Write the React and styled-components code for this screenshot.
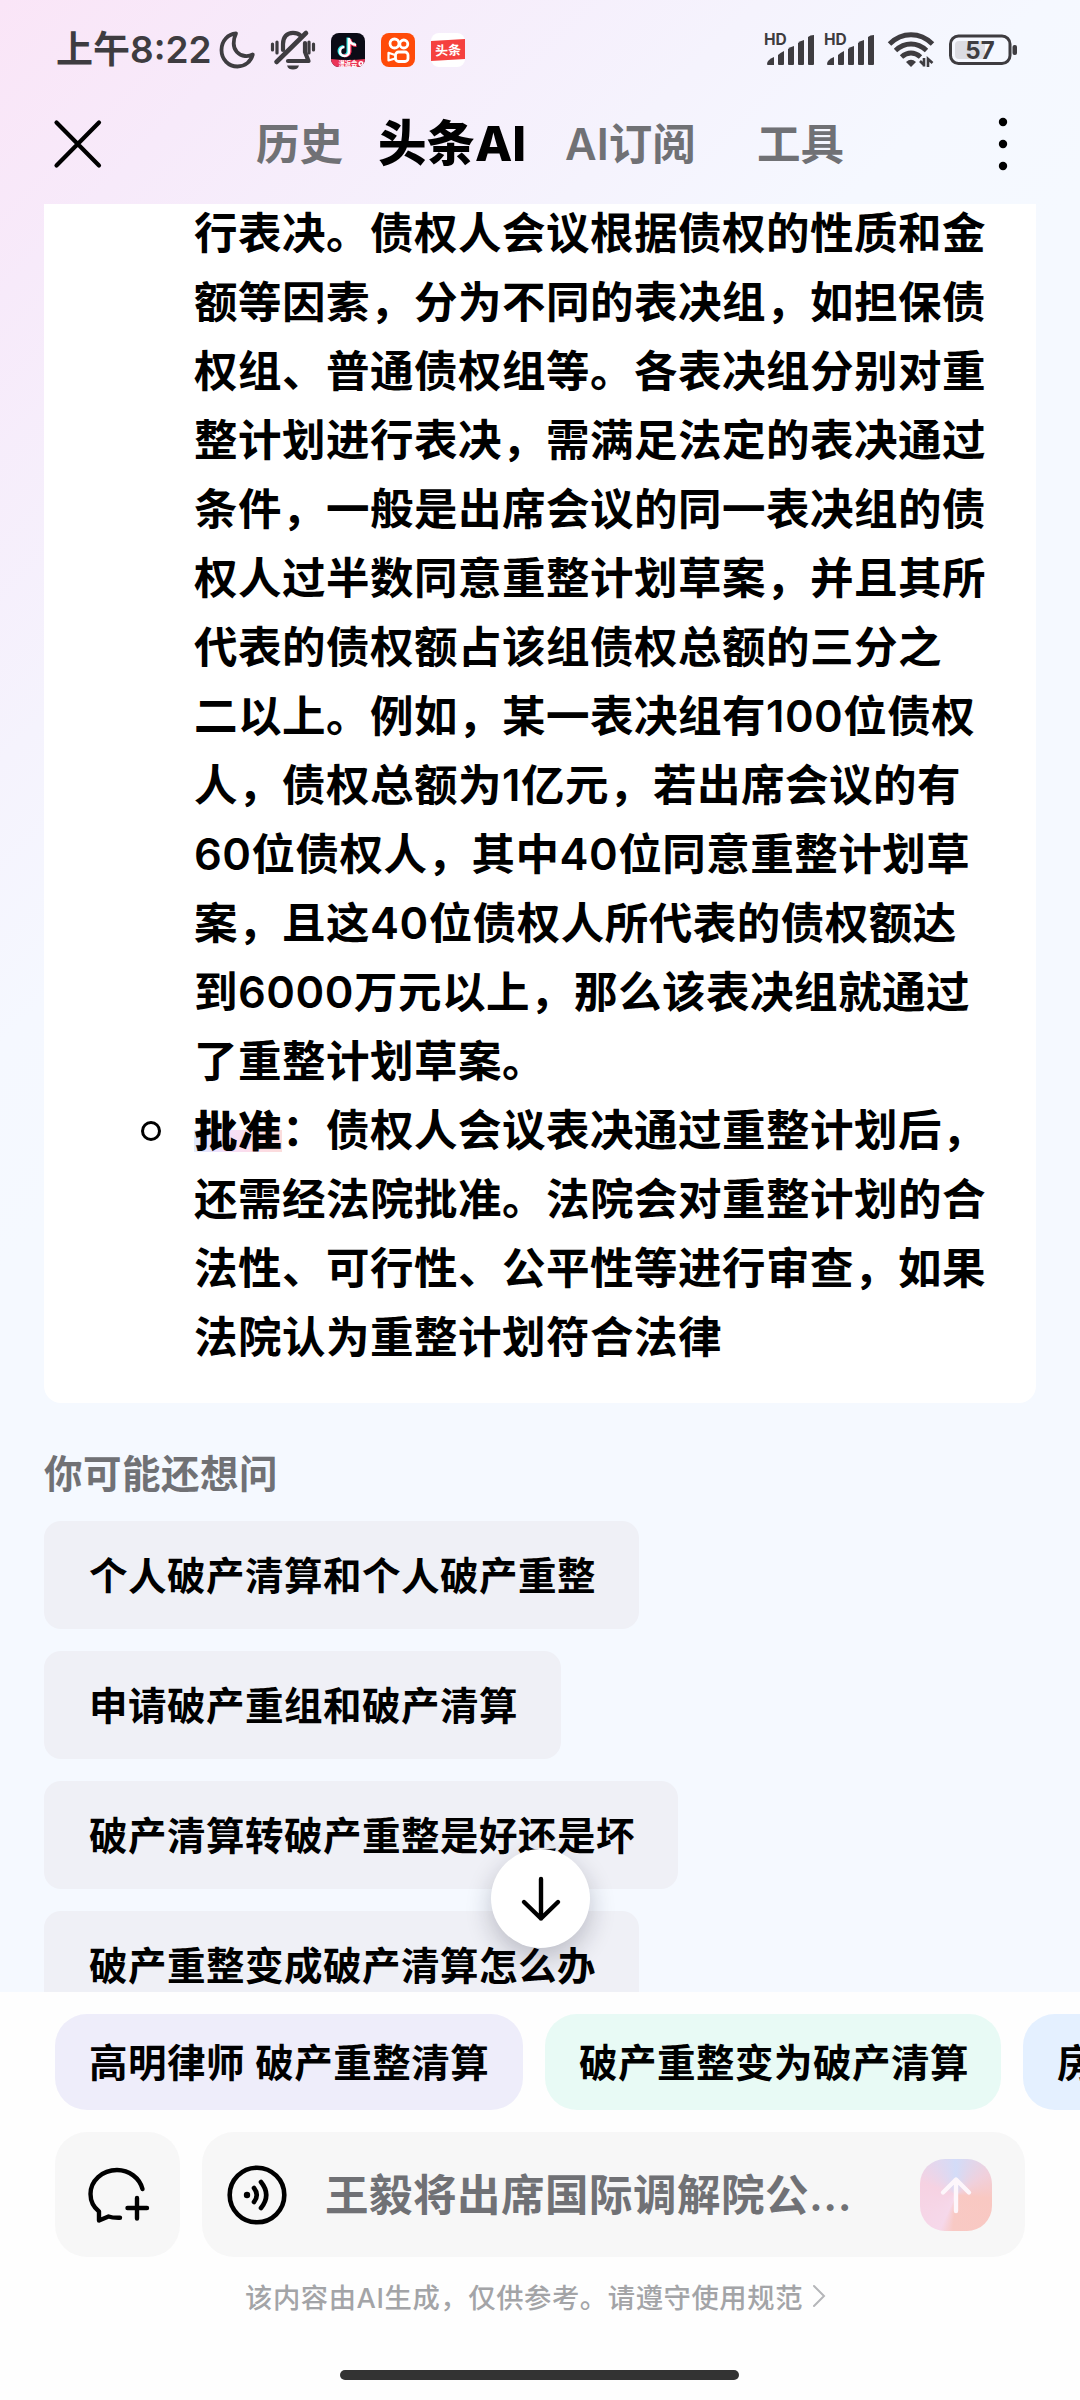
import React from 'react';
import styled, { createGlobalStyle } from 'styled-components';

const COLORS = {
    ink: '#000',
    muted: '#707175',
    faint: '#a3a4a7',
    status: '#3e3c40',
};

const GlobalStyle = createGlobalStyle`
    * {
        box-sizing: border-box;
    }

    body {
        margin: 0;
        font-family: Inter, 'Noto Sans CJK SC', sans-serif;
        color: ${COLORS.ink};
    }

    svg {
        display: block;
        flex: none;
        overflow: visible;
    }
`;

const Screen = styled.div`
    width: 1080px;
    height: 2400px;
    display: flex;
    flex-direction: column;
    overflow: hidden;
    background:
        linear-gradient(135deg, #fae5f7 0px, #f7eafa 210px, #f5f3fd 540px, #f5f8ff 740px, rgba(245, 249, 255, 0) 900px),
        #f5f9ff;
`;

const StatusBar = styled.div`
    height: 96px;
    display: flex;
    align-items: center;
    padding: 3px 62px 0 56px;
    color: ${COLORS.status};
`;

const Clock = styled.span`
    width: 163px;
    padding-bottom: 5px;
    font-size: 37px;
    font-weight: 600;
    white-space: nowrap;
`;

const StatusGroup = styled.div`
    display: flex;
    align-items: center;
    gap: ${props => props.$gap}px;
    margin-left: ${props => props.$push ? 'auto' : '0'};
`;

const NavBar = styled.div`
    height: 108px;
    display: flex;
    align-items: center;
    padding: 0 72px 12px 54px;
`;

const Tabs = styled.div`
    display: flex;
    align-items: center;
    margin-left: 154px;
    margin-right: auto;
`;

const Tab = styled.span`
    width: ${props => props.$width}px;
    font-size: ${props => props.$active ? 48.5 : 43.5}px;
    font-weight: ${props => props.$active ? 800 : 600};
    line-height: 60px;
    color: ${props => props.$active ? COLORS.ink : COLORS.muted};
    white-space: nowrap;
`;

const Feed = styled.div`
    height: 1788px;
    flex: none;
    overflow: hidden;
    padding: 0 44px;
`;

const Answer = styled.div`
    height: 1199px;
    padding: 0 0 0 150px;
    background: #fff;
    border-radius: 0 0 17px 17px;
    overflow: hidden;
`;

const Line = styled.p`
    margin: 0;
    height: 69px;
    line-height: 69px;
    font-size: 43.5px;
    font-weight: 600;
    letter-spacing: 0.5px;
    white-space: nowrap;

    &:first-child {
        margin-top: -5px;
    }
`;

const BulletLine = styled(Line)`
    display: flex;
    align-items: center;
    margin-left: -53px;
`;

const Bullet = styled.span`
    width: 20px;
    height: 20px;
    margin-right: 33px;
    border: 3px solid ${COLORS.ink};
    border-radius: 50%;
`;

const Term = styled.strong`
    height: 42px;
    line-height: 42px;
    font-weight: 900;
    background: linear-gradient(90deg, #dfeafd, #f2e0fc 35%, #fddce8 65%, #fbdcdb) 0 100% / 100% 22px no-repeat;
`;

const FollowTitle = styled.h2`
    margin: 0;
    height: 118px;
    padding-top: 41px;
    line-height: 60px;
    font-size: 38.5px;
    font-weight: 600;
    letter-spacing: 0.5px;
    color: ${COLORS.muted};
`;

const Suggestions = styled.div`
    display: flex;
    flex-direction: column;
    align-items: flex-start;
    gap: 22px;
`;

const Suggestion = styled.div`
    height: 108px;
    padding: 0 43px 0 45px;
    background: #eff0f6;
    border-radius: 17px;
    font-size: 38.5px;
    font-weight: 600;
    line-height: 111px;
    letter-spacing: 0.5px;
    white-space: nowrap;
`;

const ScrollDown = styled.button`
    position: absolute;
    left: 491px;
    top: 1849px;
    width: 99px;
    height: 99px;
    padding: 0;
    display: flex;
    align-items: center;
    justify-content: center;
    border: none;
    border-radius: 50%;
    background: #fff;
    box-shadow: 0 10px 26px rgba(20, 20, 40, 0.24);
`;

const Footer = styled.div`
    flex: 1;
    display: flex;
    flex-direction: column;
    padding: 22px 0 0 55px;
    background: #fefefe;
`;

const PillRow = styled.div`
    display: flex;
    gap: 22px;
    overflow: hidden;
`;

const Pill = styled.div`
    flex: none;
    width: ${props => props.$width}px;
    height: 96px;
    padding-left: 34px;
    border-radius: 32px;
    background: ${props => props.$tint};
    font-size: 38.5px;
    font-weight: 600;
    line-height: 98px;
    letter-spacing: 0.5px;
    white-space: nowrap;
`;

const InputRow = styled.div`
    display: flex;
    gap: 22px;
    margin-top: 22px;
`;

const NewChat = styled.div`
    width: 125px;
    height: 125px;
    display: flex;
    align-items: center;
    justify-content: center;
    border-radius: 32px;
    background: #f7f7f7;
`;

const InputBox = styled.div`
    width: 823px;
    height: 125px;
    display: flex;
    align-items: center;
    padding: 0 33px 0 25px;
    border-radius: 32px;
    background: #f7f7f7;
`;

const Placeholder = styled.span`
    flex: 1;
    margin-left: 38px;
    padding-bottom: 5px;
    font-size: 43.5px;
    font-weight: 600;
    letter-spacing: 0.5px;
    color: ${COLORS.muted};
    white-space: nowrap;
`;

const Send = styled.div`
    width: 72px;
    height: 72px;
    display: flex;
    align-items: center;
    justify-content: center;
    border-radius: 25px;
    background: conic-gradient(from 0deg at 50% 50%, #d3dcf8, #f0d0dc 55deg, #f9c8c2 95deg, #f8c9c4 185deg, #f6d8ea 205deg, #f6d2e2 290deg, #d3dcf8);
`;

const Disclaimer = styled.div`
    display: flex;
    align-items: center;
    height: 36px;
    margin: 21px 0 0 190px;
    font-size: 27.3px;
    font-weight: 500;
    letter-spacing: 0.6px;
    color: ${COLORS.faint};
    white-space: nowrap;

    svg {
        margin-left: 9px;
    }
`;

const HomeBar = styled.div`
    width: 399px;
    height: 10px;
    margin: 56px 0 0 285px;
    border-radius: 5px;
    background: #333;
`;

const Moon = () => (
    <svg width="36" height="38" viewBox="0 0 36 38" fill="none" stroke={COLORS.status} strokeWidth="3.8" strokeLinejoin="round">
        <path d="M17 2.5C9 3 2.500 10 2.500 19C2.500 28.500 9.500 35.500 18.500 35.500C26 35.500 32 30.500 33.800 23.500C31 25 28.500 25.300 26 25C19.500 24.500 14.700 19 14.700 12.500C14.700 8.500 15.500 5.500 17 2.500Z" />
    </svg>
);

const MutedBell = () => (
    <svg width="44" height="40" viewBox="0 0 44 40" fill="none" stroke={COLORS.status} strokeLinecap="round">
        <path d="M1.500 14v6M6 12v11M38 12v11M42.500 14v6" strokeWidth="3.200" />
        <path d="M12 20V14C12 7 16 2.800 22 2.800C25 2.800 27.500 3.600 29.500 5.500" strokeWidth="4.200" />
        <path d="M34 13V22L37.500 31H17" strokeWidth="4.200" strokeLinejoin="round" />
        <path d="M35 3L5.500 32" strokeWidth="4.600" />
        <path d="M16 35.500H28C27 38.500 25 39.500 22 39.500C19 39.500 17 38.500 16 35.500Z" fill={COLORS.status} stroke="none" />
    </svg>
);

const NoteApp = () => (
    <svg width="34" height="34" viewBox="0 0 34 34">
        <defs>
            <clipPath id="note-clip"><rect width="34" height="34" rx="8" /></clipPath>
        </defs>
        <g clipPath="url(#note-clip)">
            <rect width="34" height="34" fill="#0b0b16" />
            <g fill="none" strokeWidth="3">
                <path d="M17 4.500V18A4.500 4.500 0 1 1 12.500 13.500M17 5C18 9 20.500 11 24 11" stroke="#2be5e3" />
                <path d="M19 6V19A4.500 4.500 0 0 1 12 22M19 7C20 10.500 22 12.500 25.500 12.500" stroke="#fb2c55" />
                <path d="M18 5V18.500A4.500 4.500 0 1 1 13.500 14M18 6C19 10 21 11.800 25 11.800" stroke="#fff" strokeWidth="2.600" />
            </g>
            <path d="M0 26Q17 28 34 26V34H0Z" fill="#ec3558" />
            <text x="7.500" y="33" fontSize="6.300" fontWeight="700" fill="#fff">漫返会</text>
            <circle cx="30" cy="30.500" r="2.600" fill="#fff" />
            <circle cx="30" cy="30.500" r="1" fill="#ec3558" />
        </g>
    </svg>
);

const VideoApp = () => (
    <svg width="34" height="34" viewBox="0 0 34 34" fill="none" stroke="#fff" strokeWidth="2.800">
        <rect width="34" height="34" rx="8" fill="#ff4b09" stroke="none" />
        <circle cx="13.500" cy="10.500" r="4.500" />
        <circle cx="22.800" cy="11" r="4" />
        <rect x="14.500" y="19" width="12.500" height="9.500" rx="3" />
        <path d="M14 22L7.500 19.800V27.500L14 25.500" strokeLinejoin="round" strokeWidth="2.200" />
    </svg>
);

const NewsApp = () => (
    <svg width="34" height="34" viewBox="0 0 34 34">
        <rect width="34" height="34" rx="8" fill="#fff" />
        <path d="M0 8L34 6V26L0 28Z" fill="#f5413f" />
        <text x="4" y="22" fontSize="13" fontWeight="700" fill="#fff" transform="rotate(-2 17 17)">头条</text>
    </svg>
);

const Signal = () => (
    <svg width="50" height="34" viewBox="0 0 50 34" fill={COLORS.status}>
        <text x="-1" y="12" fontSize="15.500" fontWeight="700">HD</text>
        <path d="M2 31Q2 27 9 24V32H3Q2 32 2 31Z" />
        <path d="M13 22Q15 20 19 18V31Q19 32 18 32H14Q13 32 13 31Z" />
        <path d="M23 16Q25 14 29 13V31Q29 32 28 32H24Q23 32 23 31Z" />
        <path d="M33 10Q35 8 39 7V31Q39 32 38 32H34Q33 32 33 31Z" />
        <path d="M43 4Q45 2 49 2V31Q49 32 48 32H44Q43 32 43 31Z" />
    </svg>
);

const WifiIcon = styled.svg`
    margin: 0 4px 0 3px;
`;

const Wifi = () => (
    <WifiIcon width="46" height="36" viewBox="0 0 46 36" fill="none" stroke={COLORS.status} strokeWidth="5">
        <path d="M1.500 12Q11 2.800 23 2.800T44.500 12" />
        <path d="M7.500 18.500Q14.500 12 23 12T38.500 18.500" />
        <path d="M13.500 25Q18 21 23 21T32.500 25" />
        <path d="M18 30Q23 25.500 28 30L23 35Z" fill={COLORS.status} stroke="none" />
        <path d="M32 29L36.500 33.500M36 26V34.500M40 35V27L44.500 31" strokeWidth="2.600" />
    </WifiIcon>
);

const Battery = () => (
    <svg width="70" height="32" viewBox="0 0 70 32">
        <rect x="2.500" y="2" width="59.500" height="27.500" rx="8" fill="none" stroke={COLORS.status} strokeWidth="3" />
        <rect x="7" y="7" width="30" height="18" rx="4" fill="#dcdce3" />
        <rect x="64.500" y="11" width="4.500" height="10" rx="2" fill={COLORS.status} />
        <text x="32" y="24.500" textAnchor="middle" fontSize="24" fontWeight="700" fill={COLORS.status}>57</text>
    </svg>
);

const Close = () => (
    <svg width="48" height="48" viewBox="0 0 48 48" stroke="#000" strokeWidth="4.200" strokeLinecap="round">
        <path d="M2.500 2.500L45 45.500M45 2.500L2.500 45.500" />
    </svg>
);

const More = () => (
    <svg width="10" height="54" viewBox="0 0 10 54">
        <circle cx="5" cy="5" r="4.200" />
        <circle cx="5" cy="27" r="4.200" />
        <circle cx="5" cy="49" r="4.200" />
    </svg>
);

const ArrowDown = () => (
    <svg width="40" height="46" viewBox="0 0 40 46" fill="none" stroke="#000" strokeWidth="4.400" strokeLinecap="round" strokeLinejoin="round">
        <path d="M20 3V42.500M3 26L20 42.500L37 26" />
    </svg>
);

const ChatPlus = () => (
    <svg width="60" height="56" viewBox="0 0 60 56" fill="none" stroke="#000" strokeWidth="4.400" strokeLinecap="round" strokeLinejoin="round">
        <path d="M54.500 22A26.500 25 0 0 0 29 3C14 3 2.500 14 2.500 27C2.500 34.500 6 40.500 11 44.500V53.500L20.500 49.500C24.500 51 28 50.800 32 50.800" />
        <path d="M49 31V51.500M39.500 41H59" />
    </svg>
);

const Voice = () => (
    <svg width="60" height="60" viewBox="0 0 60 60" fill="none" stroke="#000" strokeWidth="4.600" strokeLinecap="round">
        <circle cx="30" cy="30" r="27.300" />
        <circle cx="20" cy="30" r="3.200" fill="#000" stroke="none" />
        <path d="M27 23Q32.500 30 27 37M34 17Q44.500 30 34 43" />
    </svg>
);

const ArrowUp = () => (
    <svg width="32" height="38" viewBox="0 0 32 38" fill="none" stroke="#fdf6fb" strokeWidth="4.400" strokeLinecap="round" strokeLinejoin="round">
        <path d="M16 35V4M3 16.500L16 3.500L29 16.500" />
    </svg>
);

const Chevron = () => (
    <svg width="14" height="24" viewBox="0 0 14 24" fill="none" stroke="#b5b6b9" strokeWidth="2" strokeLinecap="round">
        <path d="M2 2L12 12L2 22" />
    </svg>
);

const votingLines = [
    '行表决。债权人会议根据债权的性质和金',
    '额等因素，分为不同的表决组，如担保债',
    '权组、普通债权组等。各表决组分别对重',
    '整计划进行表决，需满足法定的表决通过',
    '条件，一般是出席会议的同一表决组的债',
    '权人过半数同意重整计划草案，并且其所',
    '代表的债权额占该组债权总额的三分之',
    '二以上。例如，某一表决组有100位债权',
    '人，债权总额为1亿元，若出席会议的有',
    '60位债权人，其中40位同意重整计划草',
    '案，且这40位债权人所代表的债权额达',
    '到6000万元以上，那么该表决组就通过',
    '了重整计划草案。',
];

const approvalLines = [
    '还需经法院批准。法院会对重整计划的合',
    '法性、可行性、公平性等进行审查，如果',
    '法院认为重整计划符合法律',
];

const suggestions = [
    '个人破产清算和个人破产重整',
    '申请破产重组和破产清算',
    '破产清算转破产重整是好还是坏',
    '破产重整变成破产清算怎么办',
];

const pills = [
    { text: '高明律师 破产重整清算', tint: '#eeedfa', width: 468 },
    { text: '破产重整变为破产清算', tint: '#e8faf5', width: 456 },
    { text: '房', tint: '#e4f0ff', width: 224 },
];

const App = () => {
    return (
        <Screen>
            <GlobalStyle />
            <StatusBar>
                <Clock>上午8:22</Clock>
                <StatusGroup $gap={16}>
                    <Moon />
                    <MutedBell />
                    <NoteApp />
                    <VideoApp />
                    <NewsApp />
                </StatusGroup>
                <StatusGroup $gap={10} $push>
                    <Signal />
                    <Signal />
                    <Wifi />
                    <Battery />
                </StatusGroup>
            </StatusBar>
            <NavBar>
                <Close />
                <Tabs>
                    <Tab $width={122}>历史</Tab>
                    <Tab $width={187} $active>头条AI</Tab>
                    <Tab $width={192}>AI订阅</Tab>
                    <Tab $width={90}>工具</Tab>
                </Tabs>
                <More />
            </NavBar>
            <Feed>
                <Answer>
                    {votingLines.map(line => <Line key={line}>{line}</Line>)}
                    <BulletLine>
                        <Bullet />
                        <Term>批准</Term>：债权人会议表决通过重整计划后，
                    </BulletLine>
                    {approvalLines.map(line => <Line key={line}>{line}</Line>)}
                </Answer>
                <FollowTitle>你可能还想问</FollowTitle>
                <Suggestions>
                    {suggestions.map(text => <Suggestion key={text}>{text}</Suggestion>)}
                </Suggestions>
            </Feed>
            <ScrollDown><ArrowDown /></ScrollDown>
            <Footer>
                <PillRow>
                    {pills.map(pill => (
                        <Pill key={pill.text} $tint={pill.tint} $width={pill.width}>{pill.text}</Pill>
                    ))}
                </PillRow>
                <InputRow>
                    <NewChat><ChatPlus /></NewChat>
                    <InputBox>
                        <Voice />
                        <Placeholder>王毅将出席国际调解院公...</Placeholder>
                        <Send><ArrowUp /></Send>
                    </InputBox>
                </InputRow>
                <Disclaimer>该内容由AI生成，仅供参考。请遵守使用规范<Chevron /></Disclaimer>
                <HomeBar />
            </Footer>
        </Screen>
    );
};

export default App;
